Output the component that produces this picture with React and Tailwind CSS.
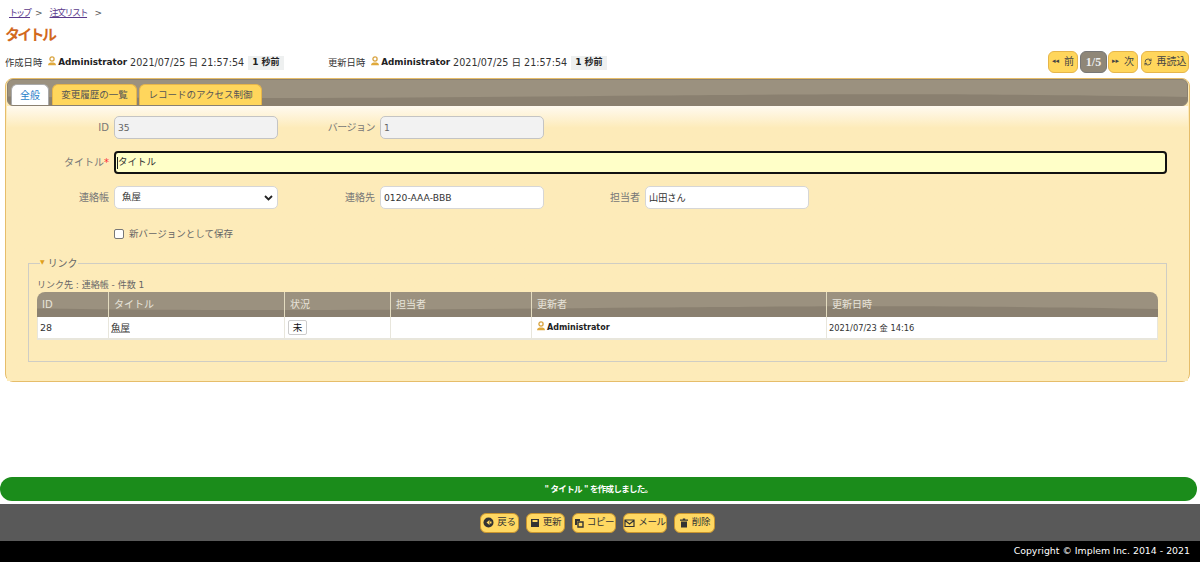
import { RefreshCw } from "lucide-react";

const FONT = "font-['DejaVu_Sans','Noto_Sans_CJK_JP',sans-serif]";

const UserIcon = ({ className = "" }) => (
  <svg width="10" height="10" viewBox="0 0 10 10" className={`shrink-0 ${className}`}>
    <circle cx="5" cy="3" r="2.1" fill="none" stroke="#d9a441" strokeWidth="1.3" />
    <path d="M1 9.2 C1 6.8 3 6.4 5 6.4 S9 6.8 9 9.2 Z" fill="#e0a93c" />
  </svg>
);

// the wave across the brown header bars
const Wave = () => (
  <svg viewBox="0 0 100 10" preserveAspectRatio="none" className="absolute inset-0 w-full h-full">
    <path d="M0 6.6 C20 7.8 35 7 55 6.2 S85 5.6 100 6.8 V10 H0 Z" fill="#8a8070" />
  </svg>
);

const BackIcon = () => (
  <svg width="11" height="11" viewBox="0 0 11 11">
    <circle cx="5.5" cy="5.5" r="5" fill="#333" />
    <path d="M6.5 3 L3.5 5.5 L6.5 8 Z M6 4.6 H8.5 V6.4 H6 Z" fill="#ffd862" />
  </svg>
);
const SaveIcon = () => (
  <svg width="10" height="10" viewBox="0 0 10 10">
    <path d="M1 1 H9 V9 H1 Z" fill="#333" />
    <path d="M2.5 2 H7.5 V4 H2.5 Z" fill="#ffd862" />
  </svg>
);
const CopyIcon = () => (
  <svg width="10" height="10" viewBox="0 0 10 10">
    <path d="M1 1 H6 V3 H3 V7 H1 Z" fill="#333" />
    <path d="M4 4 H9 V9 H4 Z" fill="none" stroke="#333" strokeWidth="1.4" />
  </svg>
);
const MailIcon = () => (
  <svg width="11" height="10" viewBox="0 0 11 10">
    <path d="M1 2 H10 V8.5 H1 Z M1 2.5 L5.5 6 L10 2.5" fill="none" stroke="#333" strokeWidth="1.2" />
  </svg>
);
const TrashIcon = () => (
  <svg width="10" height="10" viewBox="0 0 10 10">
    <path d="M2 3.5 H8 V9.5 H2 Z M1 1.6 H9 V2.8 H1 Z M3.8 0.6 H6.2 V1.6 H3.8 Z" fill="#333" />
  </svg>
);

const Label = ({ children, className = "w-[102px]" }) => (
  <label className={`text-[10px] text-[#777] text-right shrink-0 ${className}`}>{children}</label>
);

const Field = ({ value, disabled }) => (
  <div className={`w-[164px] h-[23px] ml-[5px] border rounded-[5px] px-[3px] flex items-center text-[9.2px] ${disabled ? "bg-[#f2f2f2] border-[#c4c4c4] text-[#666]" : "bg-white border-[#d6d6d6] text-[#333]"}`}>
    {value}
  </div>
);

const NavButton = ({ children, className = "" }) => (
  <button className={`h-[22px] flex items-center justify-center gap-[5px] rounded-[6px] border border-[#e6b54a] bg-[#ffd65c] text-[10px] text-[#444] whitespace-nowrap ${className}`}>
    {children}
  </button>
);

const FootButton = ({ icon, label, width }) => (
  <button className={`h-[20px] flex items-center justify-center gap-[3px] rounded-[6px] border border-[#c9952e] bg-[#ffd862] text-[9.5px] tracking-[-0.3px] text-[#333] whitespace-nowrap ${width}`}>
    {icon}
    {label}
  </button>
);

const TH = ({ children, className = "" }) => (
  <div className={`relative z-10 h-full px-[5px] flex items-center text-[10px] text-[#e8e4da] border-r border-[#e4dcc0] ${className}`}>
    {children}
  </div>
);

const TD = ({ children, className = "" }) => (
  <div className={`h-full px-[2px] flex items-center text-[9.5px] text-[#333] border-r border-[#e8e6dc] ${className}`}>
    {children}
  </div>
);

const Meta = ({ label, className = "" }) => (
  <div className={`flex items-center text-[9.6px] text-[#333] ${className}`}>
    <span className="text-[9.3px]">{label}</span>
    <UserIcon className="ml-[5px] mb-[3px]" />
    <b className="ml-[1px] text-[8.8px] text-[#222]">Administrator</b>
    <span className="ml-[3px]">2021/07/25 日 21:57:54</span>
    <b className="ml-[4px] px-[4px] bg-[#eef0f0] text-[9px] text-[#222]">1 秒前</b>
  </div>
);

export default function App() {
  return (
    <div className={`h-[562px] w-[1200px] bg-white flex flex-col overflow-hidden ${FONT}`}>
      <div className="h-[24px] pl-[9px] pt-[7px] flex items-start text-[9px] text-[#555]">
        <a className="w-[19px] whitespace-nowrap tracking-[-2px] underline text-[#5b3a8c]">トップ</a>
        <span className="ml-[7px]">&gt;</span>
        <a className="ml-[7px] w-[37px] whitespace-nowrap tracking-[-1.5px] underline text-[#5b3a8c]">注文リスト</a>
        <span className="ml-[8px]">&gt;</span>
      </div>
      <h1 className="h-[22px] pl-[5px] text-[15px] tracking-[-2.7px] leading-[22px] font-bold text-[#d2691e]">タイトル</h1>

      <div className="h-[32px] shrink-0 flex items-center justify-between pr-[11px] pb-[1px]">
        <div className="flex pl-[5px] pt-[3px]">
          <Meta label="作成日時" className="w-[323px]" />
          <Meta label="更新日時" />
        </div>
        <div className="flex">
          <NavButton className="w-[30px]"><span className="text-[7px]">◂◂</span>前</NavButton>
          <NavButton className="w-[27px] ml-[2px] !bg-[#8f8778] !border-[#777] font-bold !text-[12px] text-[#eee] font-['Liberation_Serif',serif]">1/5</NavButton>
          <NavButton className="w-[30px] ml-[1px]"><span className="text-[7px]">▸▸</span>次</NavButton>
          <NavButton className="w-[48px] ml-[3px] gap-[3px]"><RefreshCw size={8} strokeWidth={2.5} />再読込</NavButton>
        </div>
      </div>

      {/* main panel */}
      <div className="ml-[5px] w-[1185px] h-[304px] shrink-0 border border-[#e6bd6a] rounded-[8px] bg-[#fdebb9] px-[1px] flex flex-col">
        <div className="relative h-[27px] shrink-0 rounded-[6px] bg-[#9b917f] overflow-hidden border border-[#8a8070] px-[3px] pt-[4px] flex gap-[2px]">
          <Wave />
          <div className="relative z-10 w-[38px] h-[22px] rounded-t-[6px] bg-white border border-[#aaa] border-b-0 flex items-center justify-center text-[10px] text-[#2a7fc9]">全般</div>
          <div className="relative z-10 w-[85px] h-[22px] ml-[1px] rounded-t-[6px] bg-[#ffd65c] border border-[#e6b54a] border-b-0 flex items-center justify-center text-[9.5px] text-[#555]">変更履歴の一覧</div>
          <div className="relative z-10 w-[123px] h-[22px] rounded-t-[6px] bg-[#ffd65c] border border-[#e6b54a] border-b-0 flex items-center justify-center text-[9.5px] text-[#555] whitespace-nowrap">レコードのアクセス制御</div>
        </div>

        <div className="flex-1 bg-gradient-to-b from-[#fffaf0] to-[#fdebb9] to-[22px] pt-[10px]">
          <div className="flex items-center">
            <Label>ID</Label>
            <Field value="35" disabled />
            <Label className="w-[97px] tracking-[-0.5px]">バージョン</Label>
            <Field value="1" disabled />
          </div>
          <div className="flex items-center mt-[12px]">
            <Label>タイトル<span className="text-red-500">*</span></Label>
            <div className="flex-1 h-[23px] ml-[5px] mr-[21px] rounded-[4px] border-2 border-[#111] bg-[#ffffc8] px-[1px] flex items-center text-[9.5px] text-[#333]">
              <span className="w-px h-[12px] bg-[#222]" />タイトル
            </div>
          </div>
          <div className="flex items-center mt-[12px]">
            <Label>連絡帳</Label>
            <div className="w-[164px] h-[23px] ml-[5px] border border-[#d6d6d6] rounded-[5px] bg-white pl-[7px] pr-[4px] flex items-center justify-between text-[9.5px] text-[#333]">
              魚屋
              <svg width="9" height="6" viewBox="0 0 9 6"><path d="M1 1 L4.5 4.5 L8 1" fill="none" stroke="#222" strokeWidth="1.8" /></svg>
            </div>
            <Label className="w-[97px]">連絡先</Label>
            <Field value="0120-AAA-BBB" />
            <Label className="w-[96px]">担当者</Label>
            <Field value="山田さん" />
          </div>
          <div className="flex items-center mt-[18px] ml-[107px] gap-[5px] text-[9.5px] text-[#666]">
            <span className="w-[10px] h-[10px] rounded-[2px] border border-[#777] bg-white" />
            新バージョンとして保存
          </div>

          <fieldset className="mt-[15px] ml-[21px] w-[1139px] h-[106px] border border-[#cfcdc4] px-[8px] pt-[7px]">
            <legend className="ml-[3px] flex items-center gap-[3px] text-[10px] text-[#666]">
              <span className="text-[6px] text-[#e0a020] mb-[4px]">▼</span>
              リンク
            </legend>
            <div className="h-[14px] text-[9px] leading-[14px] text-[#666]">リンク先 : 連絡帳 - 件数 1</div>
            <div className="w-[1121px] border-b-2 border-[#e8e6dc]">
              <div className="relative h-[25px] rounded-t-[8px] bg-[#9b917f] overflow-hidden grid grid-cols-[72px_176px_106px_141px_295px_1fr]">
                <Wave />
                <TH>ID</TH>
                <TH>タイトル</TH>
                <TH>状況</TH>
                <TH>担当者</TH>
                <TH>更新者</TH>
                <TH className="border-r-0">更新日時</TH>
              </div>
              <div className="h-[21px] bg-white grid grid-cols-[71px_176px_106px_141px_295px_1fr] border-x border-[#e8e6dc]">
                <TD>28</TD>
                <TD><span className="underline decoration-[#999]">魚屋</span></TD>
                <TD><span className="ml-[1px] w-[19px] h-[15px] border border-[#ccc] rounded-[2px] flex items-center justify-center text-[#111]">未</span></TD>
                <TD />
                <TD className="pl-[4px]"><UserIcon className="mb-[3px] mr-[1px]" /><b className="text-[8px] text-[#222]">Administrator</b></TD>
                <TD className="border-r-0 !text-[8.3px]">2021/07/23 金 14:16</TD>
              </div>
            </div>
          </fieldset>
        </div>
      </div>

      <div className="flex-1" />

      <div className="h-[24px] mb-[3px] mr-[3px] rounded-full bg-[#1b8c1b] flex items-center justify-center text-[8.5px] tracking-[-0.7px] font-bold text-white shrink-0">
        " タイトル " を作成しました。
      </div>
      <div className="h-[37px] bg-[#595959] flex items-center justify-center gap-[7px] pr-[5px] shrink-0">
        <FootButton icon={<BackIcon />} label="戻る" width="w-[39px]" />
        <FootButton icon={<SaveIcon />} label="更新" width="w-[39px]" />
        <FootButton icon={<CopyIcon />} label="コピー" width="w-[44px]" />
        <FootButton icon={<MailIcon />} label="メール" width="w-[44px]" />
        <FootButton icon={<TrashIcon />} label="削除" width="w-[41px]" />
      </div>
      <div className="h-[21px] bg-black flex items-center justify-end pr-[10px] text-[9.4px] text-white shrink-0">
        Copyright © Implem Inc. 2014 - 2021
      </div>
    </div>
  );
}
